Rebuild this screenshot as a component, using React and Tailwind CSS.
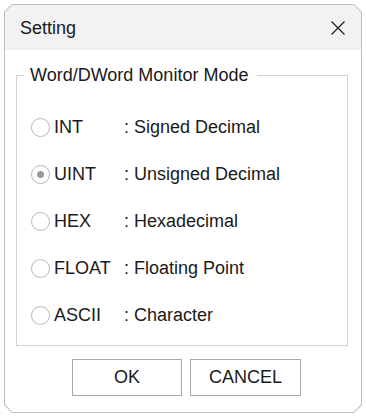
export default function App() {
  const rows = [
    { k: "INT", v: "Signed Decimal", checked: false },
    { k: "UINT", v: "Unsigned Decimal", checked: true },
    { k: "HEX", v: "Hexadecimal", checked: false },
    { k: "FLOAT", v: "Floating Point", checked: false },
    { k: "ASCII", v: "Character", checked: false },
  ];
  return (
    <div className="w-[366px] h-[417px] bg-white pl-[4px] pt-[4px]" style={{ fontFamily: '"Liberation Sans", Arial, sans-serif' }}>
      <div className="w-[358px] h-[409px] bg-[#bdbdbd] p-px [clip-path:polygon(8px_0,calc(100%_-_8px)_0,100%_8px,100%_calc(100%_-_8px),calc(100%_-_8px)_100%,8px_100%,0_calc(100%_-_8px),0_8px)]">
        <div className="w-full h-full bg-white flex flex-col [clip-path:polygon(7.4px_0,calc(100%_-_7.4px)_0,100%_7.4px,100%_calc(100%_-_7.4px),calc(100%_-_7.4px)_100%,7.4px_100%,0_calc(100%_-_7.4px),0_7.4px)]">
          <div className="h-[45px] bg-[#f2f2f2] flex items-center justify-between pl-[15px] pr-[15px] shrink-0">
            <span className="text-[18px] text-[#1a1a1a] mt-[1px]">Setting</span>
            <svg width="16" height="16" viewBox="0 0 16 16">
              <path d="M1.5 1.5 L14.5 14.5 M14.5 1.5 L1.5 14.5" stroke="#222" strokeWidth="1.3" fill="none" />
            </svg>
          </div>
          <fieldset className="ml-[11px] mt-[15px] w-[332px] h-[281px] border border-[#d2d2d2] pl-[7px] pt-[19px] shrink-0">
            <legend className="pl-[6px] pr-[9px] text-[18px] text-[#1a1a1a] leading-[20px]">Word/DWord Monitor Mode</legend>
            <div className="flex flex-col">
              {rows.map((r) => (
                <div key={r.k} className="h-[47px] flex items-center text-[18px] text-[#1a1a1a]">
                  <span className="w-[19px] h-[19px] rounded-full border border-[#b8b8b8] flex items-center justify-center ml-[7px] shrink-0">
                    {r.checked && <span className="w-[7px] h-[7px] rounded-full bg-[#9a9a9a]" />}
                  </span>
                  <span className="ml-[4px] w-[70px]">{r.k}</span>
                  <span>: {r.v}</span>
                </div>
              ))}
            </div>
          </fieldset>
          <div className="flex gap-[8px] ml-[67px] mt-[13px]">
            <button className="w-[110px] h-[37px] border border-[#a8a8a8] bg-white text-[18px] text-[#1a1a1a]">OK</button>
            <button className="w-[111px] h-[37px] border border-[#a8a8a8] bg-white text-[18px] text-[#1a1a1a]">CANCEL</button>
          </div>
        </div>
      </div>
    </div>
  );
}
